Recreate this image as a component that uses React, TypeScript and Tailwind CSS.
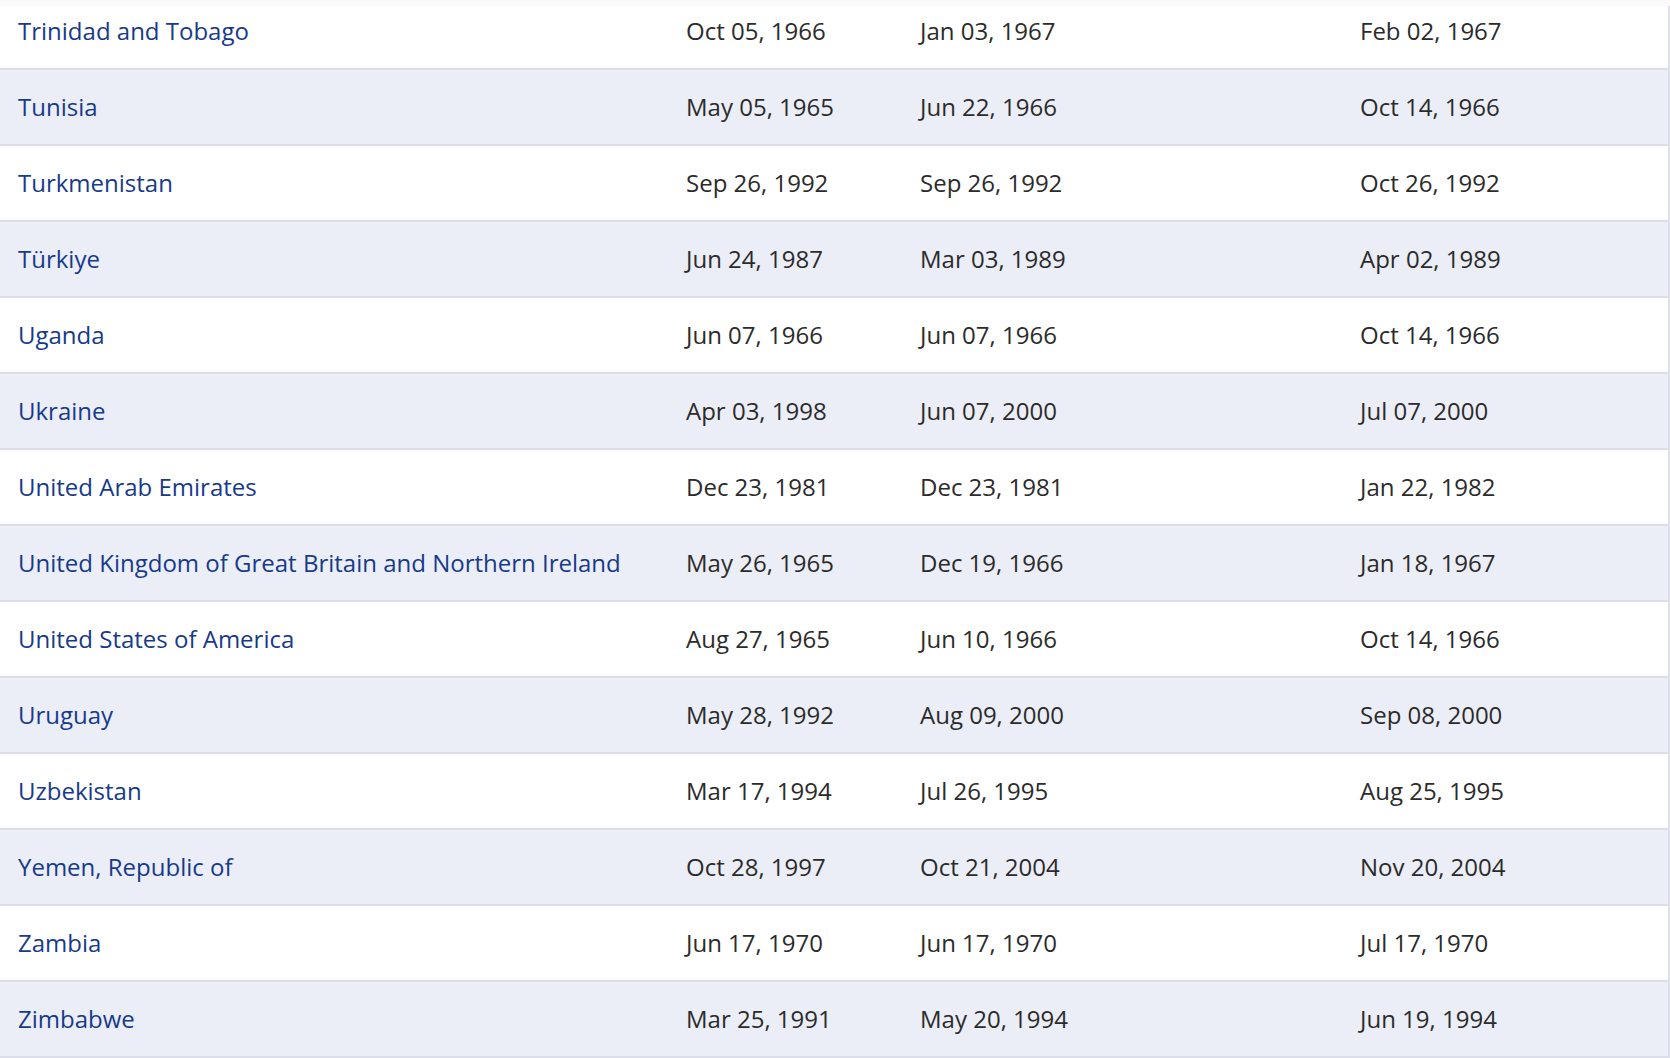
const ROWS: [string, string, string, string][] = [
  ["Trinidad and Tobago", "Oct 05, 1966", "Jan 03, 1967", "Feb 02, 1967"],
  ["Tunisia", "May 05, 1965", "Jun 22, 1966", "Oct 14, 1966"],
  ["Turkmenistan", "Sep 26, 1992", "Sep 26, 1992", "Oct 26, 1992"],
  ["Türkiye", "Jun 24, 1987", "Mar 03, 1989", "Apr 02, 1989"],
  ["Uganda", "Jun 07, 1966", "Jun 07, 1966", "Oct 14, 1966"],
  ["Ukraine", "Apr 03, 1998", "Jun 07, 2000", "Jul 07, 2000"],
  ["United Arab Emirates", "Dec 23, 1981", "Dec 23, 1981", "Jan 22, 1982"],
  ["United Kingdom of Great Britain and Northern Ireland", "May 26, 1965", "Dec 19, 1966", "Jan 18, 1967"],
  ["United States of America", "Aug 27, 1965", "Jun 10, 1966", "Oct 14, 1966"],
  ["Uruguay", "May 28, 1992", "Aug 09, 2000", "Sep 08, 2000"],
  ["Uzbekistan", "Mar 17, 1994", "Jul 26, 1995", "Aug 25, 1995"],
  ["Yemen, Republic of", "Oct 28, 1997", "Oct 21, 2004", "Nov 20, 2004"],
  ["Zambia", "Jun 17, 1970", "Jun 17, 1970", "Jul 17, 1970"],
  ["Zimbabwe", "Mar 25, 1991", "May 20, 1994", "Jun 19, 1994"],
];

export default function App() {
  return (
    <div
      className="relative h-[1058px] overflow-hidden bg-white"
      style={{ fontFamily: '"Open Sans", "Noto Sans", sans-serif' }}
    >
      <div className="-mt-[6px] border-r-2 border-[#dcdfe9]">
        {ROWS.map((row, i) => (
          <div
            key={row[0]}
            className={
              "grid h-[76px] grid-cols-[668px_234px_440px_1fr] items-center border-b-2 border-[#dcdfe9] text-[24px] " +
              (i % 2 === 1 ? "bg-[#ebeef7]" : "bg-white")
            }
          >
            <a href="#" className="pl-[18px] text-[#173a8a]">
              {row[0]}
            </a>
            <span className="pl-[18px] text-[#2b2b2b]">{row[1]}</span>
            <span className="pl-[18px] text-[#2b2b2b]">{row[2]}</span>
            <span className="pl-[18px] text-[#2b2b2b]">{row[3]}</span>
          </div>
        ))}
      </div>
      <div className="absolute left-0 right-0 top-0 h-[6px] bg-[#fafafa]" />
    </div>
  );
}
